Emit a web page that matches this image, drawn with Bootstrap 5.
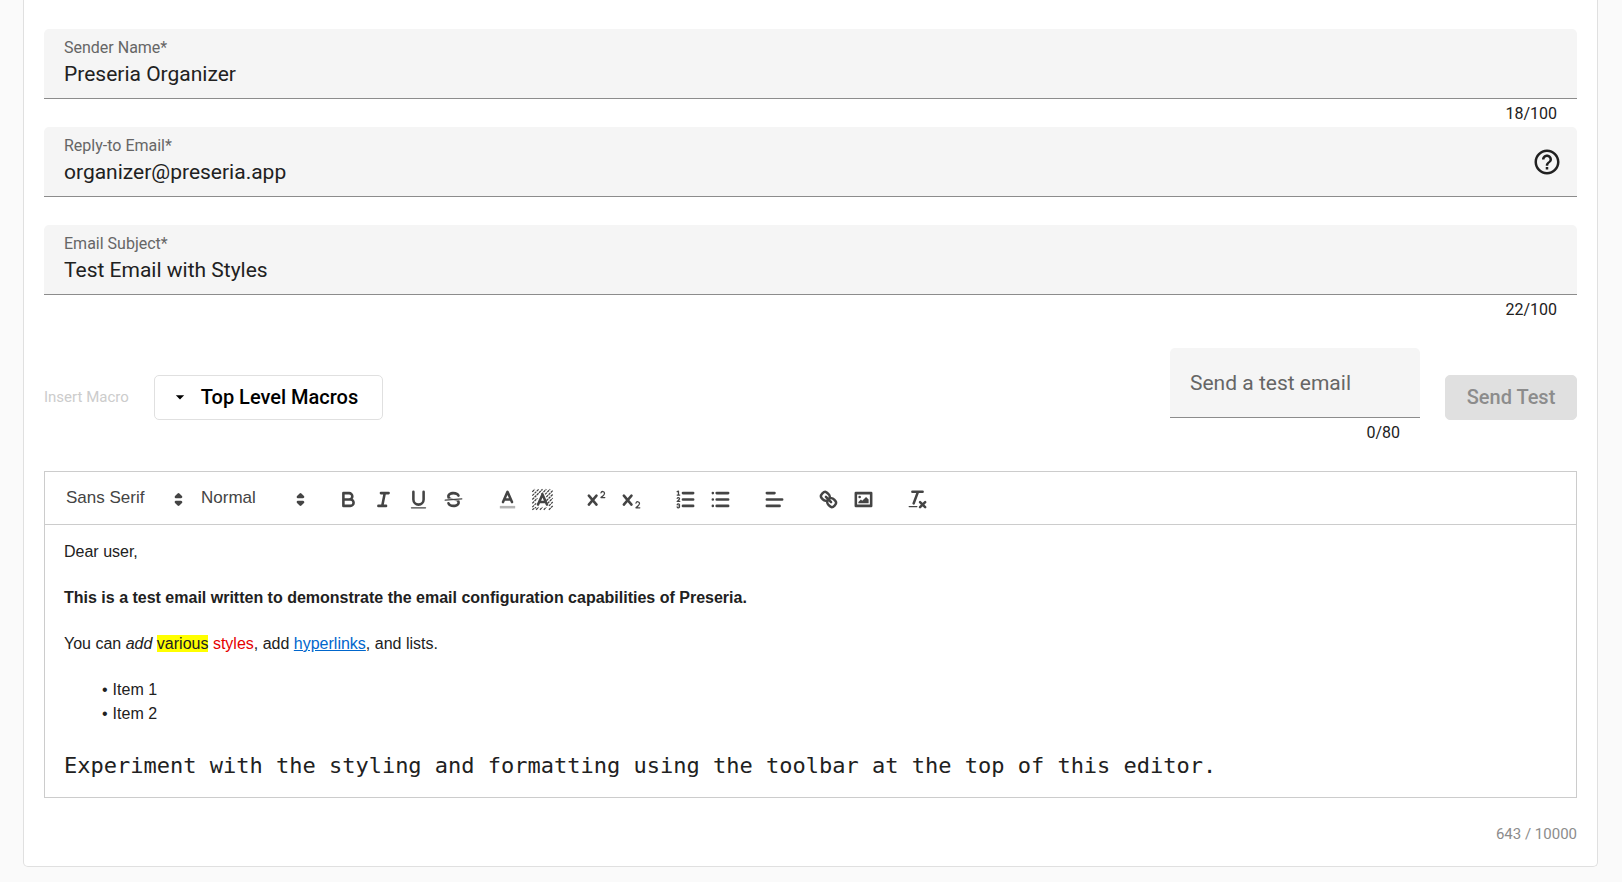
<!DOCTYPE html>
<html lang="en">
<head>
<meta charset="utf-8">
<meta name="viewport" content="width=device-width, initial-scale=1">
<title>Email Configuration</title>
<link href="https://cdn.jsdelivr.net/npm/bootstrap@5.3.0/dist/css/bootstrap.min.css" rel="stylesheet">
<style>
  body { background: #fafafa; color: #212121; font-family: Roboto, sans-serif; }
  .page-wrap { padding: 0 24px 15px 23px; }
  .panel { background: #fff; border: 1px solid #e0e0e0; border-top: 0; border-radius: 0 0 5px 5px; padding: 29px 20px 20px; }
  .field-box { height: 70px; background: #f5f5f5; border-bottom: 1px solid #8c8c8c; border-radius: 5px 5px 0 0; padding: 9px 15px 0 20px; }
  .field-box label { font-size: 16px; line-height: 20px; color: #666; }
  .field-box input { font-size: 21px; line-height: 28px; height: 32px; color: #212121; }
  .field-box input:focus { outline: 0; }
  .field-note { height: 28px; line-height: 30px; font-size: 16px; padding-right: 20px; text-align: right; }
  .send-row { margin: 25px 0; gap: 25px; }
  .test-field { width: 250px; }
  .test-field .field-box { padding-top: 0; padding-right: 20px; }
  .test-field input::placeholder { color: #666; opacity: 1; }
  .macro-caption { font-size: 15px; color: #ccc; }
  .action-btn { height: 45px; font-size: 20px; font-weight: 500; border-radius: 5px; }
  .macro-btn { min-width: 229px; padding: 0 15px; gap: 11px; color: #000; border-color: #e0e0e0; background: #fff; }
  .send-btn { min-width: 132px; padding: 0 16px; }
  .send-btn:disabled { color: #8c8c8c; background: #e0e0e0; border-color: #e0e0e0; opacity: 1; }

  .editor { border: 1px solid #ccc; font-family: "Liberation Sans", Arial, sans-serif; }
  .editor-bar { height: 53px; padding: 2px 10px 0; column-gap: 19px; border-bottom: 1px solid #ccc; color: #444; }
  .picker { position: relative; }
  .picker select { appearance: none; width: 100%; height: 30px; font-size: 17px; color: #444; padding: 0 0 2px 11px; }
  .picker svg { position: absolute; right: 0; top: 4px; pointer-events: none; }
  .picker-font { width: 135px; }
  .picker-size { width: 122px; }
  .tool { width: 35px; height: 30px; padding: 4px 6px; color: #444; display: block; line-height: 1; }
  .ico { width: 23px; height: 23px; display: block; fill: none; stroke: currentColor; stroke-width: 2; stroke-linecap: round; stroke-linejoin: round; }
  .ico .solid { fill: currentColor; stroke: none; }
  .ico .both { fill: currentColor; }
  .ico .thin { stroke-width: 1; }
  .editor-body { padding: 15px 19px; font-size: 16px; line-height: 23px; }
  .editor-body:focus { outline: 0; }
  .editor-body p, .editor-body ul { margin: 0 0 23px; }
  .editor-body ul { list-style: none; padding-left: 38px; line-height: 24px; }
  .editor-body li::before { content: "•"; margin-right: 5px; }
  .editor-body a { color: #0066cc; }
  .hl { background: #ff0; }
  .red { color: #e60000; }
  .editor-body .big-mono { font-family: "DejaVu Sans Mono", monospace; font-size: 22px; line-height: 33px; margin: 0; }
  .total { margin-top: 24px; font-size: 15px; line-height: 24px; color: #8c8c8c; }
</style>
</head>
<body>
<div class="page-wrap">
<main class="panel">
  <form>
    <div>
      <div class="field-box d-flex flex-column">
        <label for="sender">Sender Name*</label>
        <input id="sender" type="text" class="border-0 bg-transparent p-0 w-100" maxlength="100" value="Preseria Organizer">
      </div>
      <div class="field-note">18/100</div>
    </div>

    <div>
      <div class="field-box d-flex">
        <div class="d-flex flex-column flex-grow-1">
          <label for="reply">Reply-to Email*</label>
          <input id="reply" type="email" class="border-0 bg-transparent p-0 w-100" value="organizer@preseria.app">
        </div>
        <button type="button" class="btn border-0 p-0 align-self-center mb-2" aria-label="Help">
          <svg class="d-block" width="30" height="30" viewBox="0 0 24 24" fill="#212121"><path d="M11 18h2v-2h-2v2zm1-16C6.48 2 2 6.48 2 12s4.480 10 10 10 10-4.480 10-10S17.520 2 12 2zm0 18c-4.410 0-8-3.590-8-8s3.590-8 8-8 8 3.590 8 8-3.590 8-8 8zm0-14c-2.210 0-4 1.790-4 4h2c0-1.100.9-2 2-2s2 .9 2 2c0 2-3 1.750-3 5h2c0-2.250 3-2.500 3-5 0-2.210-1.790-4-4-4z"/></svg>
        </button>
      </div>
      <div class="field-note"></div>
    </div>

    <div>
      <div class="field-box d-flex flex-column">
        <label for="subject">Email Subject*</label>
        <input id="subject" type="text" class="border-0 bg-transparent p-0 w-100" maxlength="100" value="Test Email with Styles">
      </div>
      <div class="field-note">22/100</div>
    </div>

    <div class="send-row d-flex flex-wrap align-items-center">
      <span class="macro-caption">Insert Macro</span>
      <button type="button" class="btn action-btn macro-btn d-flex align-items-center">
        <svg width="20" height="20" viewBox="0 0 24 24" fill="currentColor"><path d="M7 10l5 5 5-5z"/></svg>
        <span>Top Level Macros</span>
      </button>
      <div class="test-field ms-auto">
        <div class="field-box d-flex align-items-center">
          <input type="email" class="border-0 bg-transparent p-0 w-100" maxlength="80" aria-label="Send a test email" placeholder="Send a test email">
        </div>
        <div class="field-note">0/80</div>
      </div>
      <button type="button" class="btn action-btn send-btn" disabled>Send Test</button>
    </div>

    <div class="editor">
      <div class="editor-bar d-flex align-items-center" role="toolbar" aria-label="Formatting">
        <div class="d-flex">
          <div class="picker picker-font">
            <select class="border-0 bg-transparent" aria-label="Font"><option>Sans Serif</option><option>Serif</option><option>Monospace</option></select>
            <svg class="ico" viewBox="0 0 18 18"><path class="both" d="M7 11l2 2 2-2zM7 7l2-2 2 2z"/></svg>
          </div>
          <div class="picker picker-size">
            <select class="border-0 bg-transparent" aria-label="Size"><option>Normal</option><option>Small</option><option>Large</option></select>
            <svg class="ico" viewBox="0 0 18 18"><path class="both" d="M7 11l2 2 2-2zM7 7l2-2 2 2z"/></svg>
          </div>
        </div>
        <div class="d-flex">
          <button type="button" class="btn border-0 tool" aria-label="Bold"><svg class="ico" viewBox="0 0 18 18"><path d="M5 4H9.500A2.500 2.500 0 0 1 9.500 9H5ZM5 9h5.500A2.500 2.500 0 0 1 10.500 14H5Z"/></svg></button>
          <button type="button" class="btn border-0 tool" aria-label="Italic"><svg class="ico" viewBox="0 0 18 18"><path d="M7 4h6M5 14h6M8 14L10 4"/></svg></button>
          <button type="button" class="btn border-0 tool" aria-label="Underline"><svg class="ico" viewBox="0 0 18 18"><path d="M5 3V9a4 4 0 0 0 8 0V3"/><rect class="solid" x="3" y="15" width="12" height="1" rx=".5"/></svg></button>
          <button type="button" class="btn border-0 tool" aria-label="Strikethrough"><svg class="ico" viewBox="0 0 18 18"><path class="thin" d="M15.500 8.500L2.500 9.500"/><path class="solid" d="M9.007,8C6.542,7.791,6,7.519,6,6.500,6,5.792,7.283,5,9,5c1.571,0,2.765.679,2.969,1.309a1,1,0,0,0,1.900-.617C13.356,4.106,11.354,3,9,3,6.200,3,4,4.538,4,6.500a3.200,3.200,0,0,0,.5,1.843Z"/><path class="solid" d="M8.984,10C11.457,10.208,12,10.479,12,11.500c0,0.708-1.283,1.500-3,1.500-1.571,0-2.765-.679-2.969-1.309a1,1,0,1,0-1.900.617C4.644,13.894,6.646,15,9,15c2.800,0,5-1.538,5-3.500a3.200,3.200,0,0,0-.5-1.843Z"/></svg></button>
        </div>
        <div class="d-flex">
          <button type="button" class="btn border-0 tool" aria-label="Text colour"><svg class="ico" viewBox="0 0 18 18"><path opacity=".4" stroke-linecap="butt" d="M3 15h12"/><path d="M5.500 11L9 3l3.500 8M11.630 9H6.380"/></svg></button>
          <button type="button" class="btn border-0 tool" aria-label="Background colour"><svg class="ico" viewBox="0 0 18 18"><path class="thin" stroke-dasharray="2 .5" stroke-linecap="butt" d="M1 3L3 1M1 6L6 1M1 9L9 1M1 12L5 8M8 5L12 1M1 15L4 12M11 5L15 1M1 17L4 15M12 7L17 2M12 10L17 5M13 12L17 8M14 14L17 11M4 17L6 15M14 17L17 14M7 17L9 15M10 17L12 15"/><path d="M5.500 13L9 5l3.500 8M11.630 11H6.380"/></svg></button>
        </div>
        <div class="d-flex">
          <button type="button" class="btn border-0 tool" aria-label="Superscript"><svg class="ico" viewBox="0 0 18 18"><path class="solid" d="M15.500,7H13.861a4.015,4.015,0,0,0,1.914-2.975,1.800,1.800,0,0,0-1.600-1.751A1.922,1.922,0,0,0,12.021,3.700a.5.5,0,1,0,.957.291,.917.917,0,0,1,1.053-.725.810.810,0,0,1,.744.762c0,1.077-1.164,1.925-1.934,2.486A1.423,1.423,0,0,0,12,7.500a.5.5,0,0,0,.5.5h3A.5.5,0,0,0,15.500,7Z"/><path d="M3 6l6 7M9 6l-6 7"/></svg></button>
          <button type="button" class="btn border-0 tool" aria-label="Subscript"><svg class="ico" viewBox="0 0 18 18"><path class="solid" d="M15.500,15H13.861a4.015,4.015,0,0,0,1.914-2.975,1.800,1.800,0,0,0-1.600-1.751A1.922,1.922,0,0,0,12.021,11.700a.5.5,0,1,0,.957.291,.917.917,0,0,1,1.053-.725.810.810,0,0,1,.744.762c0,1.077-1.164,1.925-1.934,2.486A1.423,1.423,0,0,0,12,15.500a.5.5,0,0,0,.5.5h3A.5.5,0,0,0,15.500,15Z"/><path d="M3 6l6 7M9 6l-6 7"/></svg></button>
        </div>
        <div class="d-flex">
          <button type="button" class="btn border-0 tool" aria-label="Numbered list"><svg class="ico" viewBox="0 0 18 18"><path d="M7 4h8M7 9h8M7 14h8"/><path class="thin" d="M2.500 5.500h2M2.500 2.900l1-.4v3M4.500 10.500h-2c0-.234,1.850-1.076,1.850-2.234A.959.959,0,0,0,2.500,8.156M2.500 14.846a.959.959,0,0,0,1.850-.109A.7.7,0,0,0,3.750,14a.688.688,0,0,0,.6-.736.959.959,0,0,0-1.850-.109"/></svg></button>
          <button type="button" class="btn border-0 tool" aria-label="Bulleted list"><svg class="ico" viewBox="0 0 18 18"><path d="M6 4h9M6 9h9M6 14h9M3 4h0M3 9h0M3 14h0"/></svg></button>
        </div>
        <div class="d-flex">
          <button type="button" class="btn border-0 tool" aria-label="Align"><svg class="ico" viewBox="0 0 18 18"><path d="M3 9h12M3 14h10M3 4h6"/></svg></button>
        </div>
        <div class="d-flex">
          <button type="button" class="btn border-0 tool" aria-label="Link"><svg class="ico" viewBox="0 0 18 18"><path d="M7 7l4 4M8.900,4.577a3.476,3.476,0,0,1,.36,4.679A3.476,3.476,0,0,1,4.577,8.900C3.185,7.500,2.035,6.400,4.217,4.217S7.500,3.185,8.900,4.577ZM13.423,9.100a3.476,3.476,0,0,0-4.679-.36,3.476,3.476,0,0,0,.36,4.679c1.392,1.392,2.500,2.542,4.679.36S14.815,10.500,13.423,9.100Z"/></svg></button>
          <button type="button" class="btn border-0 tool" aria-label="Image"><svg class="ico" viewBox="0 0 18 18"><rect x="3" y="4" width="12" height="10"/><circle class="solid" cx="6" cy="7" r="1"/><path class="solid" d="M5 12v-1l2-2 1 1 3-3 2 2v3z"/></svg></button>
        </div>
        <div class="d-flex">
          <button type="button" class="btn border-0 tool" aria-label="Clear formatting"><svg class="ico" viewBox="0 0 18 18"><path d="M5 3h8M6 12L9.350 3M11 11l4 4M15 11l-4 4"/><rect class="solid" x="2" y="14" width="7" height="1" rx=".5"/></svg></button>
        </div>
      </div>
      <div class="editor-body" contenteditable="true" role="textbox" aria-label="Email body" aria-multiline="true" spellcheck="false">
        <p>Dear user,</p>
        <p><strong>This is a test email written to demonstrate the email configuration capabilities of Preseria.</strong></p>
        <p>You can <em>add</em> <span class="hl">various</span> <span class="red">styles</span>, add <a href="#">hyperlinks</a>, and lists.</p>
        <ul><li>Item 1</li><li>Item 2</li></ul>
        <p class="big-mono">Experiment with the styling and formatting using the toolbar at the top of this editor.</p>
      </div>
    </div>
    <div class="total text-end">643 / 10000</div>
  </form>
</main>
</div>
<script src="https://cdn.jsdelivr.net/npm/bootstrap@5.3.0/dist/js/bootstrap.bundle.min.js"></script>
</body>
</html>
